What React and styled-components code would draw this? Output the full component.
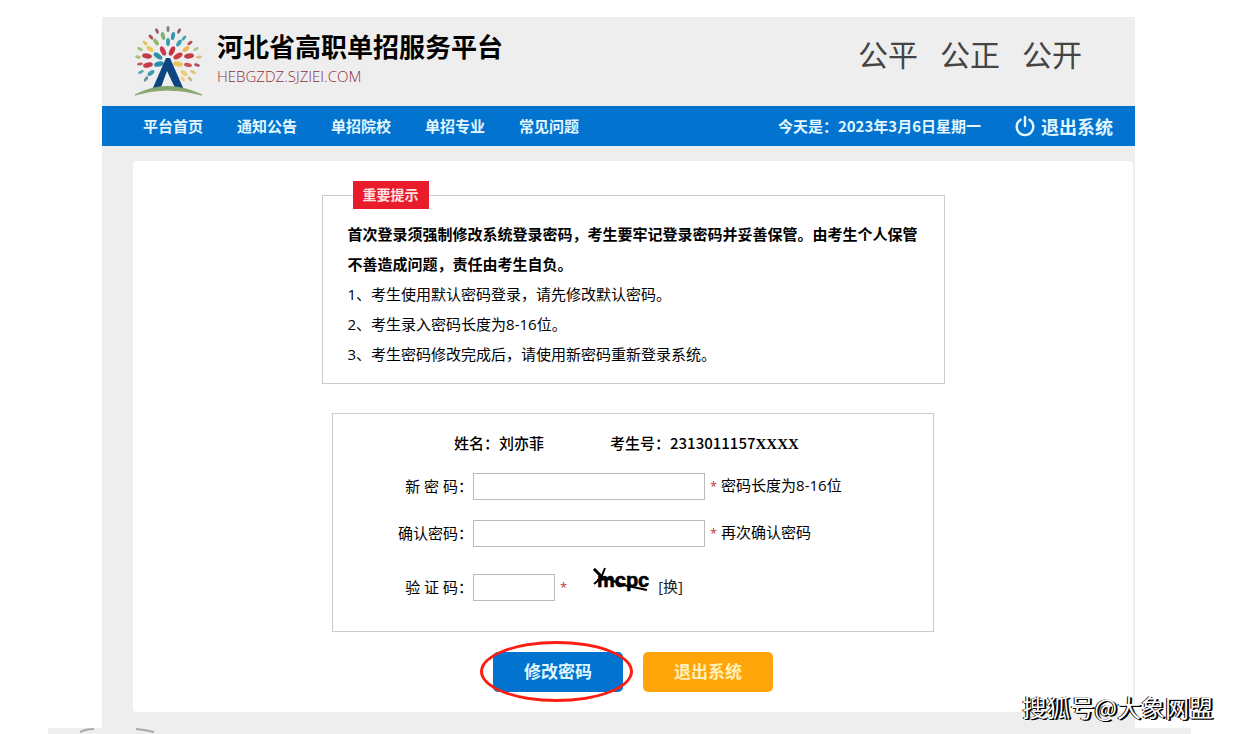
import React, { useState } from 'react';
import styled, { createGlobalStyle } from 'styled-components';

const GlobalStyle = createGlobalStyle`
  * {
    box-sizing: border-box;
  }

  body {
    margin: 0;
    background: #fff;
    color: #000;
    font-family: 'Open Sans', 'Noto Sans CJK SC', sans-serif;
    font-size: 15px;
    line-height: 30px;
  }
`;

const navItems = ['平台首页', '通知公告', '单招院校', '单招专业', '常见问题'];

const tips = [
  '1、考生使用默认密码登录，请先修改默认密码。',
  '2、考生录入密码长度为8-16位。',
  '3、考生密码修改完成后，请使用新密码重新登录系统。',
];

// x, y, angle, colour and size of every leaf in the logo
const leaves = [
  [30, 9, 65, '#9c5668', 3],
  [41, 7, 90, '#7d7f78', 3],
  [52, 9, -60, '#8d5a66', 3],
  [24, 15, 50, '#b5484f', 3],
  [36, 14, 75, '#7fb36c', 4],
  [46, 14, -80, '#3695ad', 4],
  [57, 16, -50, '#45a0b0', 3],
  [18, 21, 40, '#e4c35e', 3],
  [29, 20, 55, '#8fba6a', 4],
  [41, 20, 90, '#3a9db2', 4],
  [52, 21, -55, '#3fa0b4', 4],
  [63, 21, -35, '#b65058', 3],
  [13, 27, 30, '#97bf78', 3],
  [23, 27, 35, '#f0c654', 4],
  [36, 29, 65, '#c93a4b', 5],
  [45, 29, -65, '#c4303f', 5],
  [59, 27, -35, '#e8b954', 4],
  [69, 27, -25, '#a8c78c', 3],
  [11, 35, 15, '#a9bd72', 3],
  [20, 34, 10, '#c03c4a', 5],
  [31, 34, 35, '#2f93a6', 5],
  [51, 34, -30, '#cb3b46', 5],
  [62, 34, -10, '#c33b48', 5],
  [72, 35, -10, '#e0b78a', 3],
  [13, 42, -10, '#c55a62', 3],
  [21, 43, -15, '#c33a48', 5],
  [32, 42, -15, '#2d8fae', 5],
  [51, 42, 10, '#edc557', 5],
  [61, 43, 10, '#c9545c', 4],
  [70, 43, 15, '#a65060', 3],
  [14, 50, -25, '#58a6b4', 3],
  [24, 51, -35, '#3c9aa9', 4],
  [57, 51, 35, '#edcd72', 4],
  [66, 50, 25, '#d9c46a', 3],
  [19, 57, -55, '#6d8a9a', 3],
  [56, 57, 50, '#e9ce83', 3],
  [63, 57, 45, '#c5b77d', 3],
];

const Page = styled.div`
  position: relative;
  padding-top: 17px;
`;

const Frame = styled.div`
  margin: 0 107px 0 102px;
  padding-bottom: 16px;
  background: #eee;
`;

const Header = styled.header`
  display: flex;
  align-items: flex-start;
  height: 89px;
  padding: 8px 53px 0 31px;
`;

const Titles = styled.div`
  display: flex;
  flex-direction: column;
  margin: 4px 0 0 14px;
`;

const Title = styled.h1`
  margin: 0;
  font-size: 26px;
  line-height: 36px;
`;

const Domain = styled.span`
  color: #8a3038;
  font-size: 15px;
  font-weight: 300;
  line-height: 22px;
`;

const Slogan = styled.div`
  display: flex;
  gap: 22px;
  margin-left: auto;
  color: #444;
  font-family: 'Noto Sans CJK SC', sans-serif;
  font-size: 30px;
  line-height: 56px;
`;

const Nav = styled.nav`
  display: flex;
  align-items: center;
  gap: 34px;
  height: 40px;
  padding: 0 22px 0 41px;
  background: #0274cf;
  color: #e2f6ff;
  font-family: 'Noto Sans CJK SC', sans-serif;
  font-weight: bold;
`;

const NavLink = styled.a`
  color: inherit;
  text-decoration: none;
`;

const Today = styled.span`
  margin-left: auto;
`;

const Logout = styled.a`
  display: flex;
  align-items: center;
  gap: 6px;
  color: inherit;
  font-size: 18px;
  text-decoration: none;
`;

const Panel = styled.main`
  margin: 15px 2px 0 31px;
  padding: 34px 20px 20px;
  border-radius: 4px;
  background: #fff;
`;

const Notice = styled.section`
  position: relative;
  max-width: 623px;
  margin: 0 auto;
  padding: 23px 25px 14px;
  border: 1px solid #ccc;
`;

const NoticeTag = styled.h2`
  position: absolute;
  top: -15px;
  left: 30px;
  margin: 0;
  padding: 0 10px;
  background: #e91c2b;
  color: #ffe3e3;
  font-size: 14px;
  line-height: 28px;
`;

const Paragraph = styled.p`
  margin: 0;
  font-weight: ${(props) => (props.$strong ? 'bold' : 'normal')};
`;

const FormBox = styled.div`
  max-width: 602px;
  margin: 29px auto 0;
  padding: 14px 20px 30px 60px;
  border: 1px solid #ccc;
`;

const Candidate = styled.div`
  display: flex;
  gap: 66px;
  padding-left: 61px;
  font-family: 'Noto Sans CJK SC', sans-serif;
  font-weight: 500;
`;

const Serif = styled.span`
  font-family: 'Liberation Serif', serif;
  font-weight: bold;
`;

const Row = styled.div`
  display: flex;
  align-items: flex-start;
  height: 27px;
  margin-top: ${(props) => props.$gap}px;
`;

const Label = styled.label`
  width: 80px;
  line-height: 27px;
  text-align: right;
  white-space: nowrap;
`;

const Input = styled.input`
  width: ${(props) => (props.$short ? 82 : 232)}px;
  height: 27px;
  padding: 0 6px;
  border: 1px solid #bbb;
  background: #fff;
  font: inherit;
`;

const Hint = styled.span`
  margin-left: 5px;
  line-height: 24px;
`;

const Star = styled.span`
  color: #c0392f;
  font-size: 13px;
`;

const Captcha = styled.svg`
  margin: -8px 0 0 26px;
`;

const Refresh = styled.button`
  margin-left: 9px;
  padding: 0;
  border: 0;
  background: none;
  color: #222;
  font: inherit;
  font-size: 15px;
  line-height: 24px;
  cursor: pointer;
`;

const Actions = styled.div`
  position: relative;
  display: flex;
  gap: 20px;
  width: fit-content;
  margin: 20px auto 0;
`;

const Button = styled.button`
  width: 130px;
  height: 40px;
  border: 0;
  border-radius: 5px;
  background: ${(props) => (props.$primary ? '#0274cf' : '#ffa50a')};
  color: ${(props) => (props.$primary ? '#dff7ff' : '#fff0b8')};
  font: inherit;
  font-size: 17px;
  font-weight: bold;
  cursor: pointer;
`;

const Marker = styled.div`
  position: absolute;
  top: -11px;
  left: -13px;
  width: 153px;
  height: 61px;
  border: 3px solid #fd1d12;
  border-radius: 50%;
  pointer-events: none;
`;

const Footer = styled.footer`
  height: 6px;
  margin: 0 51px 0 48px;
  background: #eee;
`;

const FooterArt = styled.svg`
  display: block;
  margin-left: 30px;
`;

const Watermark = styled.div`
  position: absolute;
  right: 29px;
  bottom: 9px;
  color: #fff;
  font-family: 'Noto Sans CJK SC', sans-serif;
  font-size: 24px;
  line-height: 36px;
  text-shadow: 1px 1px 0 #000, 2px 1px 0 #000, -1px 0 0 #000;
`;

const Logo = () => (
  <svg width="70" height="72" viewBox="6 3 70 72" aria-hidden="true">
    {leaves.map(([x, y, angle, fill, size], index) => (
      <ellipse
        key={index}
        cx={x}
        cy={y}
        rx={size}
        ry={size / 2}
        fill={fill}
        transform={`rotate(${angle} ${x} ${y})`}
      />
    ))}
    <path d="M25 68 L39 36 H43 L57 68 H49 L40 49 L33 68 Z" fill="#0d4580" />
    <path d="M8 73 Q40 56 75 73 Q40 63 8 73 Z" fill="#85a66d" stroke="#85a66d" />
  </svg>
);

const PowerIcon = () => (
  <svg
    width="20"
    height="22"
    viewBox="0 0 20 22"
    fill="none"
    stroke="currentColor"
    strokeWidth="2.4"
    strokeLinecap="round"
    aria-hidden="true"
  >
    <path d="M5.6 4.8a8.3 8.3 0 1 0 8.8 0" />
    <path d="M10 2v9" />
  </svg>
);

const CaptchaImage = () => (
  <Captcha width="56" height="30" viewBox="0 0 56 30" role="img" aria-label="验证码">
    <text
      x="4"
      y="21"
      fontFamily="Liberation Sans"
      fontSize="20"
      fontWeight="bold"
      stroke="#000"
      strokeWidth="0.6"
    >
      mcpc
    </text>
    <path
      d="M1 3 L10 12 M12 2 L8 12 L1 18 M4 14 L16 13 L30 19 L54 24"
      fill="none"
      stroke="#000"
      strokeWidth="2"
    />
    <path d="M1 3 L9 11" stroke="#000" strokeWidth="3" />
  </Captcha>
);

const App = () => {
  const [password, setPassword] = useState('');
  const [confirm, setConfirm] = useState('');
  const [code, setCode] = useState('');

  const handleSubmit = (e) => {
    e.preventDefault();
  };

  return (
    <>
      <GlobalStyle />
      <Page>
        <Frame>
          <Header>
            <Logo />
            <Titles>
              <Title>河北省高职单招服务平台</Title>
              <Domain>HEBGZDZ.SJZIEI.COM</Domain>
            </Titles>
            <Slogan>
              <span>公平</span>
              <span>公正</span>
              <span>公开</span>
            </Slogan>
          </Header>
          <Nav>
            {navItems.map((item) => (
              <NavLink key={item} href="#">
                {item}
              </NavLink>
            ))}
            <Today>今天是：2023年3月6日星期一</Today>
            <Logout href="#">
              <PowerIcon />
              退出系统
            </Logout>
          </Nav>
          <Panel>
            <Notice>
              <NoticeTag>重要提示</NoticeTag>
              <Paragraph $strong>
                首次登录须强制修改系统登录密码，考生要牢记登录密码并妥善保管。由考生个人保管不善造成问题，责任由考生自负。
              </Paragraph>
              {tips.map((tip) => (
                <Paragraph key={tip}>{tip}</Paragraph>
              ))}
            </Notice>
            <form onSubmit={handleSubmit}>
              <FormBox>
                <Candidate>
                  <span>姓名：刘亦菲</span>
                  <span>
                    考生号：2313011157<Serif>XXXX</Serif>
                  </span>
                </Candidate>
                <Row $gap={14}>
                  <Label htmlFor="password">新 密 码：</Label>
                  <Input
                    id="password"
                    type="password"
                    value={password}
                    onChange={(e) => setPassword(e.target.value)}
                  />
                  <Hint>
                    <Star>*</Star> 密码长度为8-16位
                  </Hint>
                </Row>
                <Row $gap={20}>
                  <Label htmlFor="confirm">确认密码：</Label>
                  <Input
                    id="confirm"
                    type="password"
                    value={confirm}
                    onChange={(e) => setConfirm(e.target.value)}
                  />
                  <Hint>
                    <Star>*</Star> 再次确认密码
                  </Hint>
                </Row>
                <Row $gap={27}>
                  <Label htmlFor="code">验 证 码：</Label>
                  <Input
                    id="code"
                    type="text"
                    $short
                    value={code}
                    onChange={(e) => setCode(e.target.value)}
                  />
                  <Hint>
                    <Star>*</Star>
                  </Hint>
                  <CaptchaImage />
                  <Refresh type="button">[换]</Refresh>
                </Row>
              </FormBox>
              <Actions>
                <Button type="submit" $primary>
                  修改密码
                </Button>
                <Button type="button">退出系统</Button>
                <Marker />
              </Actions>
            </form>
          </Panel>
        </Frame>
        <Footer>
          <FooterArt width="80" height="6" viewBox="0 0 80 6" aria-hidden="true">
            <path d="M2 4 Q8 1 16 1 M58 1 Q68 2 76 4" fill="none" stroke="#a9aba6" strokeWidth="2" />
          </FooterArt>
        </Footer>
        <Watermark>搜狐号@大象网盟</Watermark>
      </Page>
    </>
  );
};

export default App;
